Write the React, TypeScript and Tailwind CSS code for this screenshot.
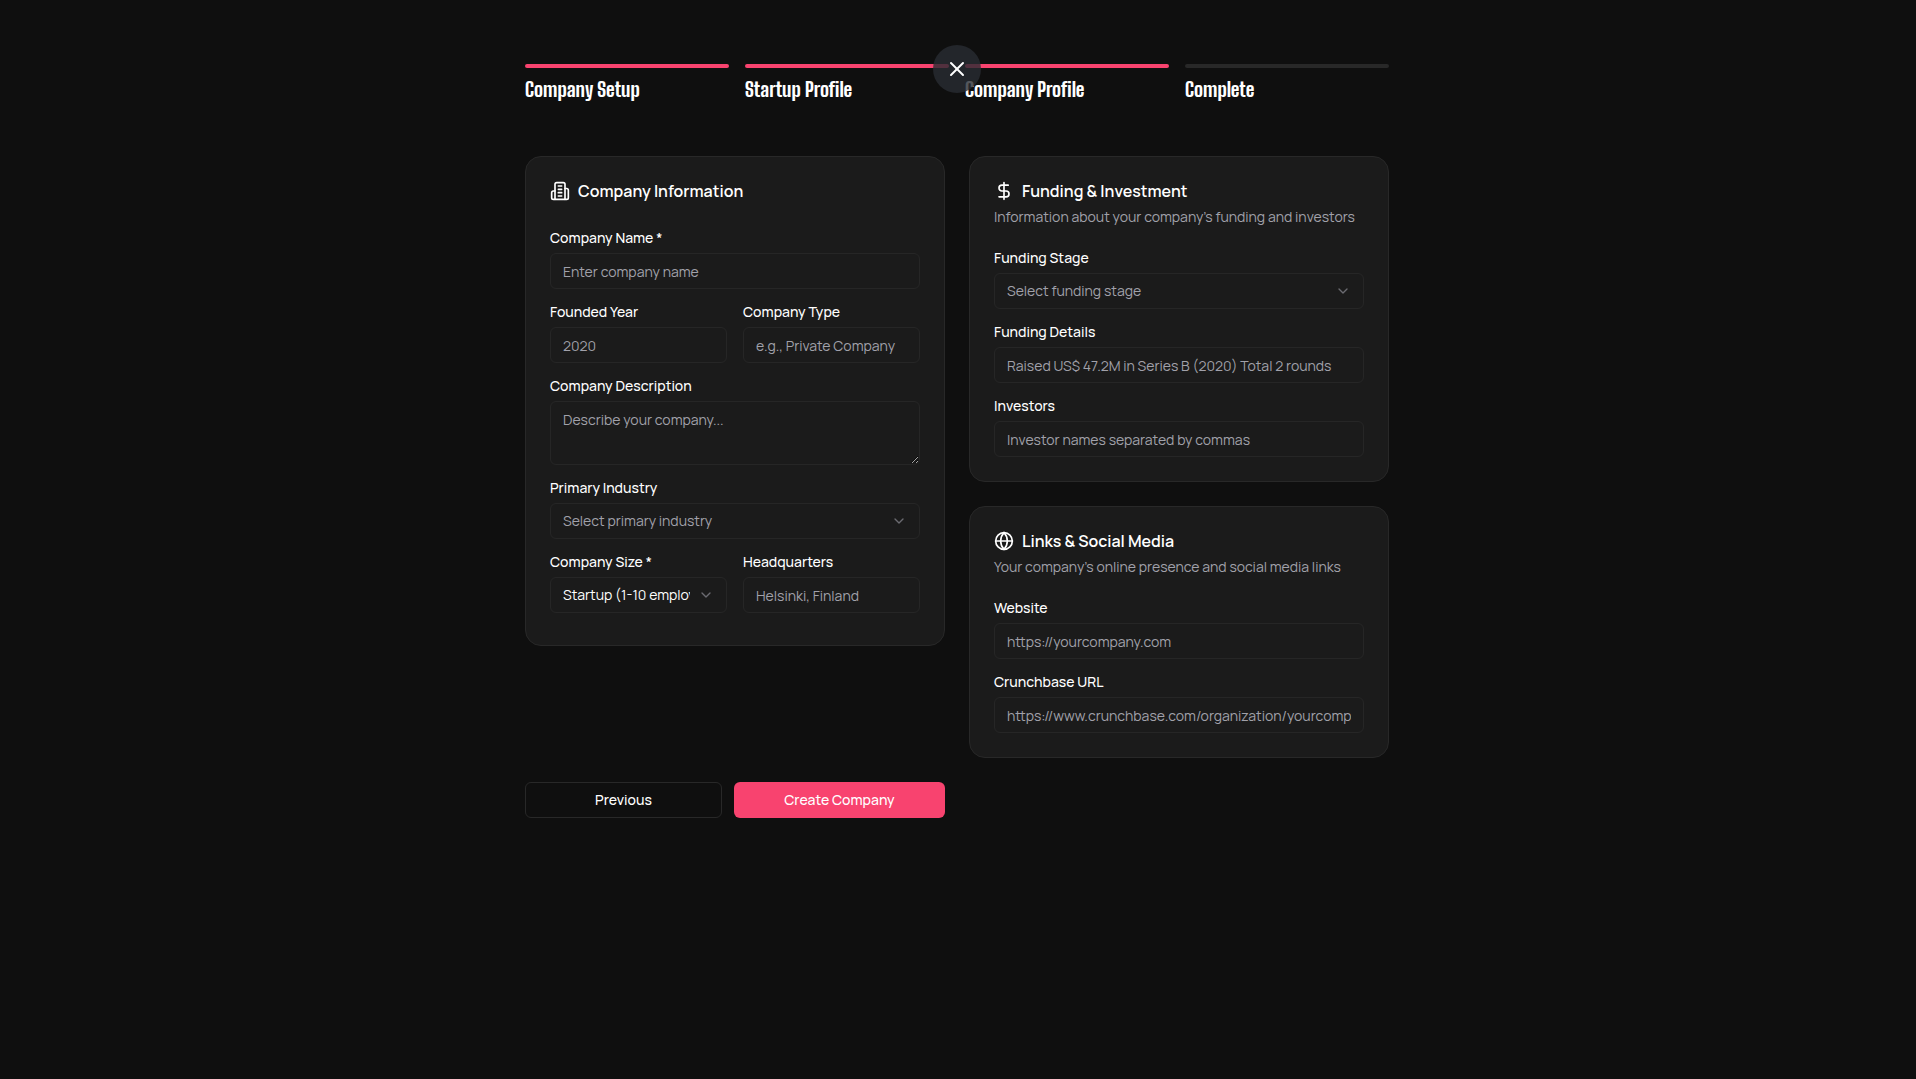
import { useState } from "react";
import type { ReactNode } from "react";
import { ChevronDown, DollarSign, Globe, X } from "lucide-react";

const STEPS = [
  { label: "Company Setup", done: true },
  { label: "Startup Profile", done: true },
  { label: "Company Profile", done: true },
  { label: "Complete", done: false },
];

const CONTROL =
  "w-full rounded-md border border-[#262626] bg-transparent px-3 text-sm placeholder:text-[#a1a1aa] outline-none focus:border-[#f8436f]";

function IconBuilding() {
  return (
    <svg
      viewBox="0 0 24 24"
      className="h-5 w-5 shrink-0"
      fill="none"
      stroke="currentColor"
      strokeWidth="2"
      strokeLinecap="round"
      strokeLinejoin="round"
      aria-hidden="true"
    >
      <path d="M6 22V4a2 2 0 0 1 2-2h8a2 2 0 0 1 2 2v18Z" />
      <path d="M6 12H4a2 2 0 0 0-2 2v6a2 2 0 0 0 2 2h2" />
      <path d="M18 9h2a2 2 0 0 1 2 2v9a2 2 0 0 1-2 2h-2" />
      <path d="M10 6h4M10 10h4M10 14h4M10 18h4" />
    </svg>
  );
}

function Field({ id, label, children }: { id: string; label: string; children: ReactNode }) {
  return (
    <div className="flex min-w-0 flex-col gap-2">
      <label htmlFor={id} className="text-sm leading-[14px] font-medium">
        {label}
      </label>
      {children}
    </div>
  );
}

function TextField({ id, label, placeholder }: { id: string; label: string; placeholder: string }) {
  return (
    <Field id={id} label={label}>
      <input id={id} placeholder={placeholder} className={`${CONTROL} h-9`} />
    </Field>
  );
}

function SelectField({
  id,
  label,
  placeholder,
  options,
  initial = "",
}: {
  id: string;
  label: string;
  placeholder?: string;
  options: string[];
  initial?: string;
}) {
  const [value, setValue] = useState(initial);

  return (
    <Field id={id} label={label}>
      <div className="relative">
        <select
          id={id}
          value={value}
          onChange={(e) => setValue(e.target.value)}
          className={`${CONTROL} h-9 appearance-none pr-9 ${value ? "text-white" : "text-[#a1a1aa]"}`}
        >
          {placeholder && <option value="">{placeholder}</option>}
          {options.map((o) => (
            <option key={o}>{o}</option>
          ))}
        </select>
        <ChevronDown className="pointer-events-none absolute top-2.5 right-[13px] h-4 w-4 text-[#a1a1aa] opacity-60" />
      </div>
    </Field>
  );
}

function Card({
  icon,
  title,
  description,
  className = "",
  children,
}: {
  icon: ReactNode;
  title: string;
  description?: string;
  className?: string;
  children: ReactNode;
}) {
  return (
    <section className={`rounded-2xl border border-[#282828] bg-[#1b1b1b] p-6 ${className}`}>
      <header className="mb-6 flex flex-col gap-1.5">
        <h2 className="flex items-center gap-2 text-base leading-5 font-semibold">
          {icon}
          {title}
        </h2>
        <p className="text-sm text-[#a1a1aa]">{description}</p>
      </header>
      <div className="flex flex-col gap-4">{children}</div>
    </section>
  );
}

export default function App() {
  return (
    <div className="relative min-h-screen bg-[#0f0f0f] pr-0.5 font-['Manrope','Inter',sans-serif] text-white">
      <main className="mx-auto max-w-4xl px-4 py-16">
        {/* step indicator */}
        <ol className="grid grid-cols-4 gap-4">
          {STEPS.map((s) => (
            <li key={s.label}>
              <div className={`h-1 rounded-full ${s.done ? "bg-[#f8436f]" : "bg-[#282828]"}`} />
              <p className="mt-2 font-['Big_Shoulders_Display','Big_Shoulders','Liberation_Sans',sans-serif] text-xl leading-[26px] font-extrabold">
                {s.label}
              </p>
            </li>
          ))}
        </ol>

        <form className="mt-[54px]" onSubmit={(e) => e.preventDefault()}>
          <div className="grid items-start gap-6 md:grid-cols-2">
            <Card icon={<IconBuilding />} title="Company Information" className="pb-8">
              <TextField id="name" label="Company Name *" placeholder="Enter company name" />
              <div className="grid grid-cols-2 gap-4">
                <TextField id="founded" label="Founded Year" placeholder="2020" />
                <TextField id="type" label="Company Type" placeholder="e.g., Private Company" />
              </div>
              <Field id="description" label="Company Description">
                <textarea
                  id="description"
                  placeholder="Describe your company..."
                  className={`${CONTROL} h-16 resize-y py-2`}
                />
              </Field>
              <SelectField
                id="industry"
                label="Primary Industry"
                placeholder="Select primary industry"
                options={["Software", "Fintech", "Healthcare"]}
              />
              <div className="grid grid-cols-2 gap-4">
                <SelectField
                  id="size"
                  label="Company Size *"
                  options={["Startup (1-10 employees)", "Small (11-50 employees)"]}
                  initial="Startup (1-10 employees)"
                />
                <TextField id="hq" label="Headquarters" placeholder="Helsinki, Finland" />
              </div>
            </Card>

            <div className="flex flex-col gap-6">
              <Card
                icon={<DollarSign className="h-5 w-5" />}
                title="Funding & Investment"
                description="Information about your company's funding and investors"
              >
                <SelectField
                  id="stage"
                  label="Funding Stage"
                  placeholder="Select funding stage"
                  options={["Pre-seed", "Seed", "Series A", "Series B"]}
                />
                <TextField
                  id="details"
                  label="Funding Details"
                  placeholder="Raised US$ 47.2M in Series B (2020) Total 2 rounds"
                />
                <TextField
                  id="investors"
                  label="Investors"
                  placeholder="Investor names separated by commas"
                />
              </Card>

              <Card
                icon={<Globe className="h-5 w-5" />}
                title="Links & Social Media"
                description="Your company's online presence and social media links"
              >
                <TextField id="website" label="Website" placeholder="https://yourcompany.com" />
                <TextField
                  id="crunchbase"
                  label="Crunchbase URL"
                  placeholder="https://www.crunchbase.com/organization/yourcompany"
                />
              </Card>
            </div>

            <div className="flex gap-3">
              <button
                type="button"
                className="h-9 flex-[12] cursor-pointer rounded-md border border-[#282828] text-sm font-medium"
              >
                Previous
              </button>
              <button
                type="submit"
                className="h-9 flex-[13] cursor-pointer rounded-md bg-[#f8436f] text-sm font-medium"
              >
                Create Company
              </button>
            </div>
          </div>
        </form>
      </main>

      {/* close button floats over the steps */}
      <div className="absolute inset-x-0 top-[45px] flex justify-center pr-0.5">
        <button
          type="button"
          aria-label="Close"
          className="flex h-12 w-12 cursor-pointer items-center justify-center rounded-full bg-[#282c32]/80"
        >
          <X className="h-6 w-6" />
        </button>
      </div>
    </div>
  );
}
